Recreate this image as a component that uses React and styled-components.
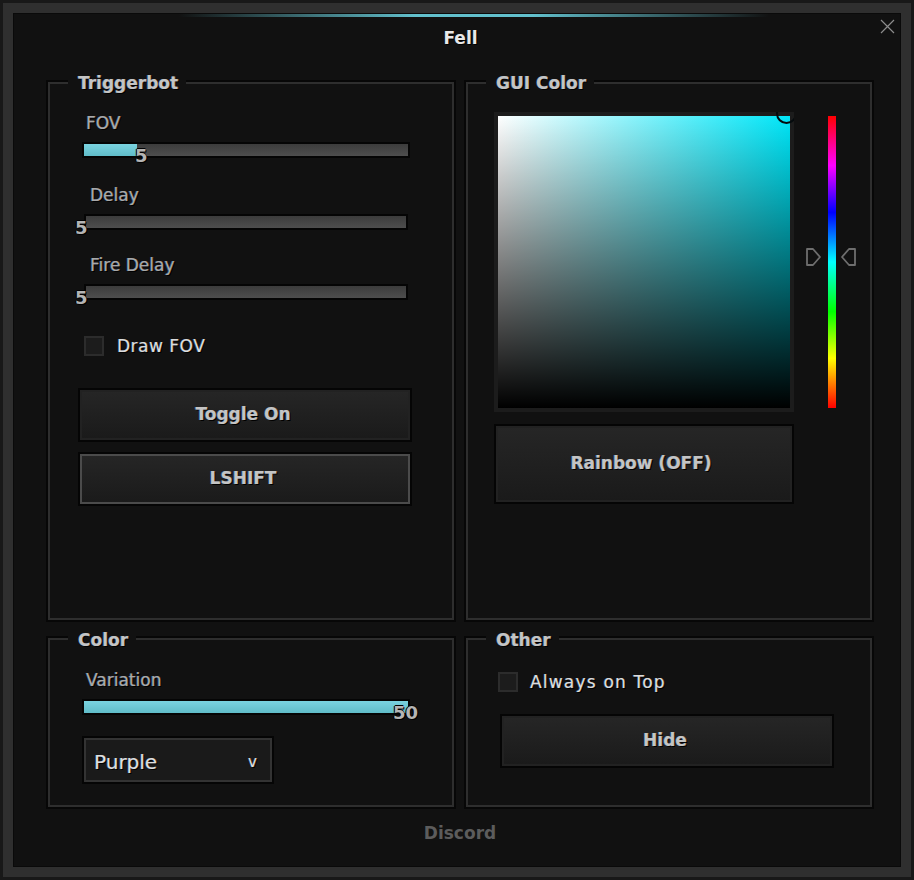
import React from "react";
import styled, { createGlobalStyle } from "styled-components";

const Global = createGlobalStyle`
  html, body { margin: 0; padding: 0; background: #111; }
  * { box-sizing: border-box; }
`;

const fringe = `-0.6px 0 rgba(70,150,230,.55), 0.6px 0 rgba(210,130,60,.45), 1.2px 1.2px 0 #000`;

const Window = styled.div`
  position: relative;
  width: 914px;
  height: 880px;
  background: #181818;
  padding: 3px;
  font-family: "DejaVu Sans", "Liberation Sans", sans-serif;
  color: #c8c8c8;
  overflow: hidden;
`;

const Band = styled.div`
  height: 874px;
  width: 908px;
  padding: 10px;
  background: #2f2f2f;
`;

const Inner = styled.div`
  position: relative;
  width: 888px;
  height: 854px;
  background: #111;
  border: 1px solid #0a0a0a;
`;

const Accent = styled.div`
  position: absolute;
  left: 165px;
  top: 0;
  width: 590px;
  height: 3px;
  background: linear-gradient(to right, rgba(94,197,208,0), #62c0cc 40%, #62c0cc 60%, rgba(94,197,208,0));
`;

const Title = styled.div`
  position: absolute;
  left: 0;
  right: 0;
  top: 13px;
  text-align: center;
  font-size: 17px;
  line-height: 22px;
  font-weight: 700;
  color: #e8e8e8;
  padding-left: 7px;
  text-shadow: 1px 1px 0 #000;
`;

const Close = styled.svg`
  position: absolute;
  left: 866px;
  top: 5px;
  width: 15px;
  height: 15px;
`;

const Panels = styled.div`
  position: absolute;
  left: 32px;
  top: 66px;
  display: grid;
  grid-template-columns: 410px 410px;
  grid-template-rows: 542px 173px;
  column-gap: 8px;
  row-gap: 14px;
`;

const Panel = styled.section`
  position: relative;
  display: flex;
  flex-direction: column;
  align-items: flex-start;
  border: 2px solid #070707;
  box-shadow: inset 0 0 0 2px #2e2e2e;
`;

const Legend = styled.h3`
  position: absolute;
  left: 20px;
  top: ${(p) => p.$top}px;
  margin: 0;
  padding: 0 8px 0 10px;
  background: #111;
  font-size: 17px;
  line-height: 22px;
  font-weight: 700;
  color: #c4c4c4;
  text-shadow: ${fringe};
`;

const SliderLabel = styled.div`
  margin-top: ${(p) => p.$top}px;
  margin-left: ${(p) => p.$left}px;
  font-size: 17px;
  line-height: 22px;
  color: #a9a9a9;
  text-shadow: ${fringe};
`;

const Track = styled.div`
  position: relative;
  margin-top: 8px;
  margin-left: ${(p) => p.$left}px;
  width: ${(p) => p.$width}px;
  height: 16px;
  border: 2px solid #050505;
  background: linear-gradient(to bottom, #3c3c3c, #4e4e4e);
`;

const Fill = styled.div`
  height: 100%;
  background: linear-gradient(to bottom, #7ad3e0, #60bcc8);
`;

const Value = styled.span`
  position: absolute;
  top: 2px;
  left: ${(p) => p.$left}px;
  font-size: 18px;
  line-height: 20px;
  font-weight: 700;
  color: #b4b4b4;
  text-shadow: 1px 1px 0 #000, -1px 0 0 #000, 0 -1px 0 #000;
`;

const CheckRow = styled.label`
  display: flex;
  align-items: center;
  margin-top: ${(p) => p.$top}px;
  margin-left: ${(p) => p.$left}px;
  height: 20px;
  font-size: 17px;
  letter-spacing: ${(p) => p.$spacing}px;
  color: #dcdcdc;
  text-shadow: ${fringe};
`;

const Box = styled.span`
  width: 20px;
  height: 20px;
  margin-right: ${(p) => p.$gap}px;
  background: #1c1c1c;
  border: 2px solid #2c2c2c;
`;

const Button = styled.button`
  display: block;
  margin-top: ${(p) => p.$top}px;
  margin-left: ${(p) => p.$left}px;
  width: ${(p) => p.$width}px;
  height: ${(p) => p.$height}px;
  padding: 0 ${(p) => p.$shift || 4}px 3px 0;
  border: 2px solid #050505;
  box-shadow: inset 0 0 0 2px ${(p) => (p.$focused ? "#4b4b4b" : "#222")};
  background: linear-gradient(to bottom, #262626, #1a1a1a);
  font-family: inherit;
  font-size: 17px;
  font-weight: 700;
  color: #c4c4c4;
  text-shadow: ${fringe};
`;

const Select = styled.div`
  display: flex;
  align-items: center;
  justify-content: space-between;
  margin-top: 21px;
  margin-left: 34px;
  width: 192px;
  height: 48px;
  padding: 3px 15px 0 10px;
  border: 2px solid #050505;
  box-shadow: inset 0 0 0 2px #333;
  background: #1a1a1a;
  font-size: 20px;
  color: #dedede;
  text-shadow: ${fringe};
`;

const Caret = styled.span`
  font-size: 15px;
`;

const PickerFrame = styled.div`
  position: relative;
  margin-top: 30px;
  margin-left: 28px;
  width: 300px;
  height: 300px;
  padding: 4px;
  background: #1c1c1c;
  overflow: hidden;
`;

const PickerField = styled.div`
  width: 292px;
  height: 292px;
  background:
    linear-gradient(to top, #000, rgba(0, 0, 0, 0)),
    linear-gradient(to right, #fff, #00e6f8);
`;

const PickerDot = styled.div`
  position: absolute;
  left: 282px;
  top: -9px;
  width: 21px;
  height: 21px;
  border-radius: 50%;
  border: 2px solid #050b0e;
`;

const HueBar = styled.div`
  position: absolute;
  left: 362px;
  top: 34px;
  width: 8px;
  height: 292px;
  background: linear-gradient(to bottom, #f00, #f0f 17%, #00f 33%, #0ff 50%, #0f0 67%, #ff0 83%, #f00);
`;

const HueArrow = styled.svg`
  position: absolute;
  top: 165px;
  left: ${(p) => p.$left}px;
  width: 18px;
  height: 20px;
`;

const Discord = styled.div`
  position: absolute;
  left: 0;
  right: 0;
  top: 808px;
  padding-left: 6px;
  text-align: center;
  font-size: 17px;
  line-height: 22px;
  font-weight: 700;
  color: #5c5c5c;
`;

export default function App() {
  return (
    <Window>
      <Global />
      <Band>
        <Inner>
          <Accent />
          <Title>Fell</Title>
          <Close viewBox="0 0 15 15">
            <path d="M1 1 L14 14 M14 1 L1 14" stroke="#8c8c8c" strokeWidth="1.2" fill="none" />
          </Close>
          <Panels>
            <Panel>
              <Legend $top={-10}>Triggerbot</Legend>
              <SliderLabel $top={30} $left={38}>FOV</SliderLabel>
              <Track $left={34} $width={328}>
                <Fill style={{ width: "16.5%" }} />
                <Value $left={51}>5</Value>
              </Track>
              <SliderLabel $top={26} $left={42}>Delay</SliderLabel>
              <Track $left={36} $width={324}>
                <Value $left={-11}>5</Value>
              </Track>
              <SliderLabel $top={24} $left={42}>Fire Delay</SliderLabel>
              <Track $left={36} $width={324}>
                <Value $left={-11}>5</Value>
              </Track>
              <CheckRow $top={36} $left={36} $spacing={0.5}>
                <Box $gap={13} />
                Draw FOV
              </CheckRow>
              <Button $top={32} $left={30} $width={334} $height={54}>Toggle On</Button>
              <Button $top={10} $left={30} $width={334} $height={54} $focused>LSHIFT</Button>
            </Panel>
            <Panel>
              <Legend $top={-10}>GUI Color</Legend>
              <PickerFrame>
                <PickerField />
                <PickerDot />
              </PickerFrame>
              <Button $top={12} $left={28} $width={300} $height={80} $shift={6}>Rainbow (OFF)</Button>
              <HueBar />
              <HueArrow $left={339} viewBox="0 0 18 20">
                <path d="M2 2 H8 L15 10 L8 18 H2 Z" stroke="#6e6e6e" strokeWidth="1.8" strokeLinejoin="round" fill="none" />
              </HueArrow>
              <HueArrow $left={373} viewBox="0 0 18 20">
                <path d="M16 2 H10 L3 10 L10 18 H16 Z" stroke="#6e6e6e" strokeWidth="1.8" strokeLinejoin="round" fill="none" />
              </HueArrow>
            </Panel>
            <Panel>
              <Legend $top={-9}>Color</Legend>
              <SliderLabel $top={31} $left={38}>Variation</SliderLabel>
              <Track $left={34} $width={328}>
                <Fill style={{ width: "100%" }} />
                <Value $left={309}>50</Value>
              </Track>
              <Select>
                Purple
                <Caret>v</Caret>
              </Select>
            </Panel>
            <Panel>
              <Legend $top={-9}>Other</Legend>
              <CheckRow $top={34} $left={32} $spacing={1.2}>
                <Box $gap={12} />
                Always on Top
              </CheckRow>
              <Button $top={22} $left={34} $width={334} $height={54}>Hide</Button>
            </Panel>
          </Panels>
          <Discord>Discord</Discord>
        </Inner>
      </Band>
    </Window>
  );
}
